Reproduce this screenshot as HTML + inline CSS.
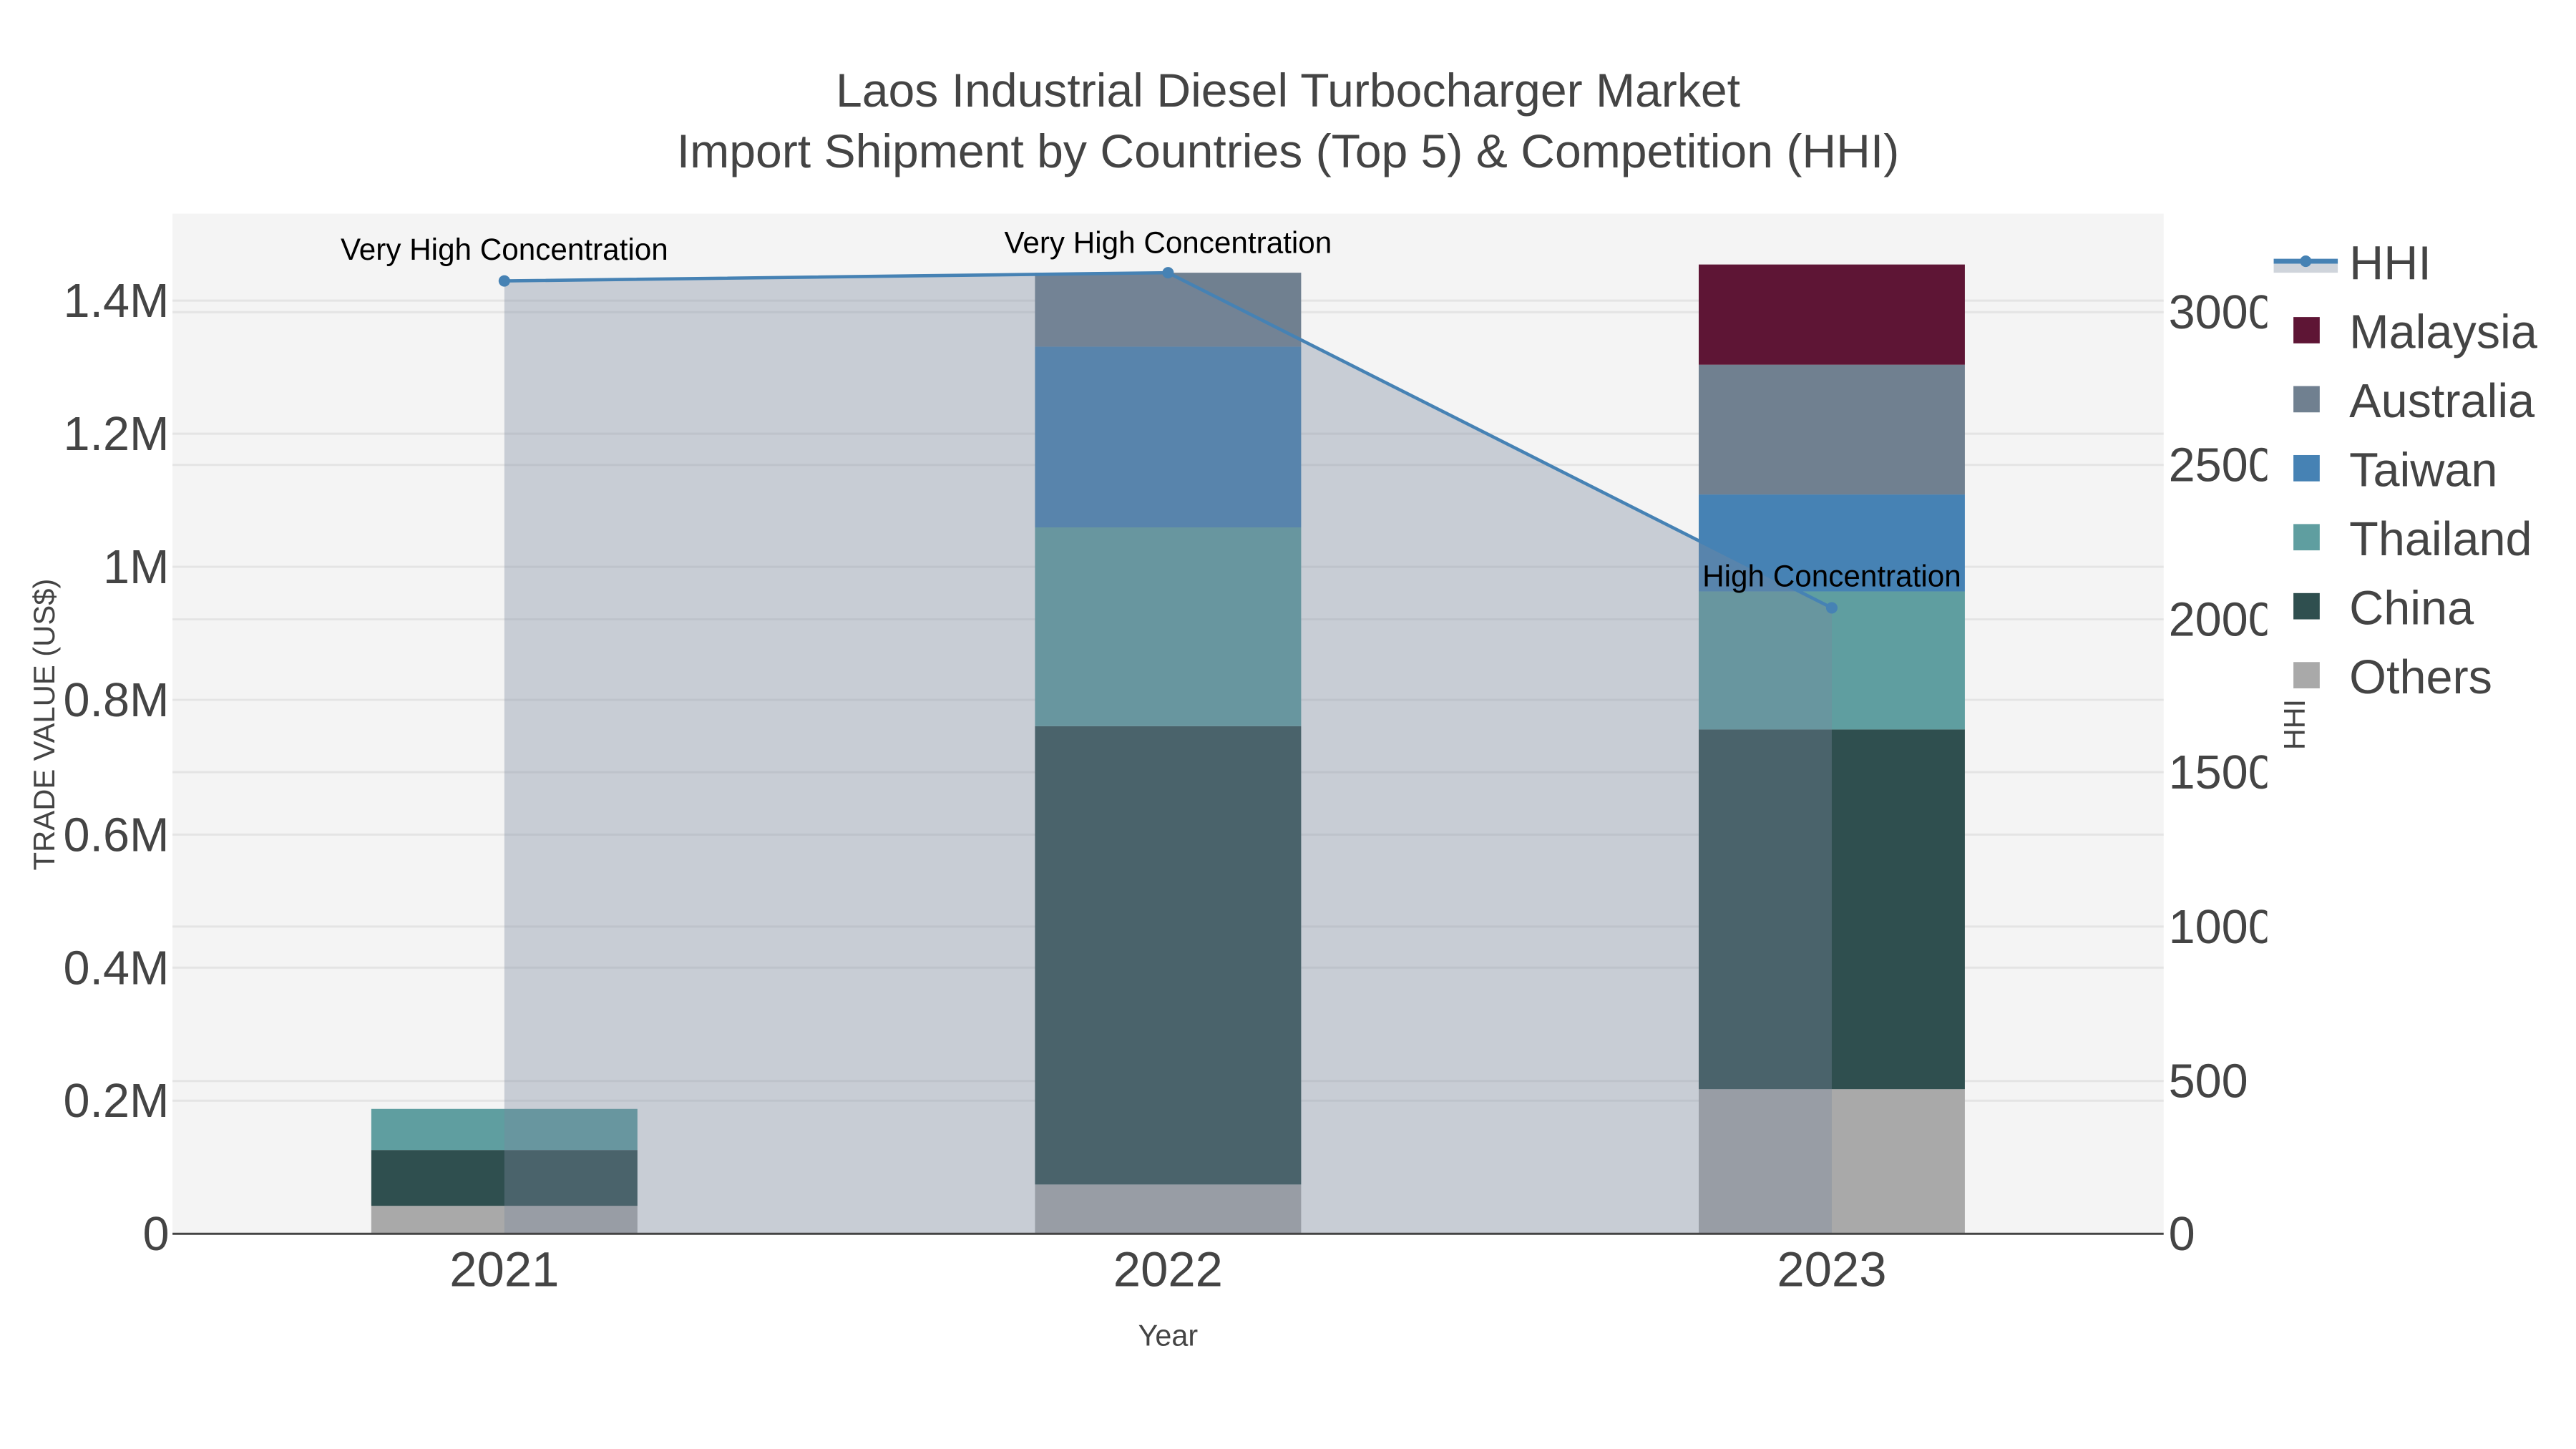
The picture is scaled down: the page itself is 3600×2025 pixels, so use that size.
<!DOCTYPE html>
<html><head><meta charset="utf-8"><style>
html,body{margin:0;padding:0;background:#fff;}
svg{display:block;}
text{font-family:"Liberation Sans",sans-serif;}
</style></head><body>
<svg width="3600" height="2025" viewBox="0 0 1568 882" preserveAspectRatio="none" xmlns="http://www.w3.org/2000/svg">
<defs><clipPath id="rc"><rect x="1300" y="0" width="80" height="882"/></clipPath></defs>
<rect width="1568" height="882" fill="#fff"/>
<rect x="105" y="130" width="1212" height="621" fill="#f4f4f4"/>
<g stroke="#e4e4e4" stroke-width="1.3">
<line x1="105" x2="1317" y1="670" y2="670"/><line x1="105" x2="1317" y1="589" y2="589"/>
<line x1="105" x2="1317" y1="508" y2="508"/><line x1="105" x2="1317" y1="426" y2="426"/>
<line x1="105" x2="1317" y1="345" y2="345"/><line x1="105" x2="1317" y1="264" y2="264"/>
<line x1="105" x2="1317" y1="183" y2="183"/>
<line x1="105" x2="1317" y1="658" y2="658"/><line x1="105" x2="1317" y1="564" y2="564"/>
<line x1="105" x2="1317" y1="470" y2="470"/><line x1="105" x2="1317" y1="377" y2="377"/>
<line x1="105" x2="1317" y1="283" y2="283"/><line x1="105" x2="1317" y1="190" y2="190"/>
</g>
<rect x="226" y="734" width="162" height="17" fill="#a9a9a9"/>
<rect x="226" y="700" width="162" height="34" fill="#2f4f4f"/>
<rect x="226" y="675" width="162" height="25" fill="#5f9ea0"/>
<rect x="630" y="721" width="162" height="30" fill="#a9a9a9"/>
<rect x="630" y="442" width="162" height="279" fill="#2f4f4f"/>
<rect x="630" y="321" width="162" height="121" fill="#5f9ea0"/>
<rect x="630" y="211" width="162" height="110" fill="#4682b4"/>
<rect x="630" y="166" width="162" height="45" fill="#708090"/>
<rect x="1034" y="663" width="162" height="88" fill="#a9a9a9"/>
<rect x="1034" y="444" width="162" height="219" fill="#2f4f4f"/>
<rect x="1034" y="360" width="162" height="84" fill="#5f9ea0"/>
<rect x="1034" y="301" width="162" height="59" fill="#4682b4"/>
<rect x="1034" y="222" width="162" height="79" fill="#708090"/>
<rect x="1034" y="161" width="162" height="61" fill="#5e1535"/>
<polygon points="307,171 711,166 1115,370 1115,751 307,751" fill="rgba(122,136,158,0.36)"/>
<polyline points="307,171 711,166 1115,370" fill="none" stroke="#4682b4" stroke-width="2"/>
<circle cx="307" cy="171" r="3.5" fill="#4682b4"/><circle cx="711" cy="166" r="3.5" fill="#4682b4"/><circle cx="1115" cy="370" r="3.5" fill="#4682b4"/>
<line x1="105" x2="1317" y1="751" y2="751" stroke="#444" stroke-width="1.3"/>
<g font-size="18.4" fill="#000" text-anchor="middle">
<text x="307" y="158">Very High Concentration</text>
<text x="711" y="154">Very High Concentration</text>
<text x="1115" y="357">High Concentration</text>
</g>
<g font-size="28.8" fill="#444" text-anchor="middle">
<text x="784" y="65">Laos Industrial Diesel Turbocharger Market</text>
<text x="784" y="102">Import Shipment by Countries (Top 5) &amp; Competition (HHI)</text>
</g>
<g font-size="29" fill="#444" text-anchor="end">
<text x="103" y="761">0</text><text x="103" y="680">0.2M</text><text x="103" y="599">0.4M</text>
<text x="103" y="518">0.6M</text><text x="103" y="436">0.8M</text><text x="103" y="355">1M</text>
<text x="103" y="274">1.2M</text><text x="103" y="193">1.4M</text>
</g>
<g font-size="29" fill="#444" clip-path="url(#rc)">
<text x="1320" y="761">0</text><text x="1320" y="668">500</text><text x="1320" y="574">1000</text>
<text x="1320" y="480">1500</text><text x="1320" y="387">2000</text><text x="1320" y="293">2500</text>
<text x="1320" y="200">3000</text>
</g>
<g font-size="30" fill="#444" text-anchor="middle">
<text x="307" y="783">2021</text><text x="711" y="783">2022</text><text x="1115" y="783">2023</text>
</g>
<text x="711" y="819" font-size="18" fill="#444" text-anchor="middle">Year</text>
<text transform="translate(33,441) rotate(-90)" font-size="18.2" fill="#444" text-anchor="middle">TRADE VALUE (US$)</text>
<text transform="translate(1403,441) rotate(-90)" font-size="18" fill="#444" text-anchor="middle">HHI</text>
<rect x="1384" y="160" width="39" height="6" fill="#cfd4db"/>
<line x1="1384" x2="1423" y1="159" y2="159" stroke="#4682b4" stroke-width="3"/>
<circle cx="1403.5" cy="159" r="3.5" fill="#4682b4"/>
<g font-size="29" fill="#444">
<text x="1430" y="170">HHI</text><text x="1430" y="212">Malaysia</text><text x="1430" y="254">Australia</text>
<text x="1430" y="296">Taiwan</text><text x="1430" y="338">Thailand</text><text x="1430" y="380">China</text>
<text x="1430" y="422">Others</text>
</g>
<rect x="1396" y="193" width="16" height="16" fill="#5e1535"/>
<rect x="1396" y="235" width="16" height="16" fill="#708090"/>
<rect x="1396" y="277" width="16" height="16" fill="#4682b4"/>
<rect x="1396" y="319" width="16" height="16" fill="#5f9ea0"/>
<rect x="1396" y="361" width="16" height="16" fill="#2f4f4f"/>
<rect x="1396" y="403" width="16" height="16" fill="#a9a9a9"/>
</svg>
</body></html>
